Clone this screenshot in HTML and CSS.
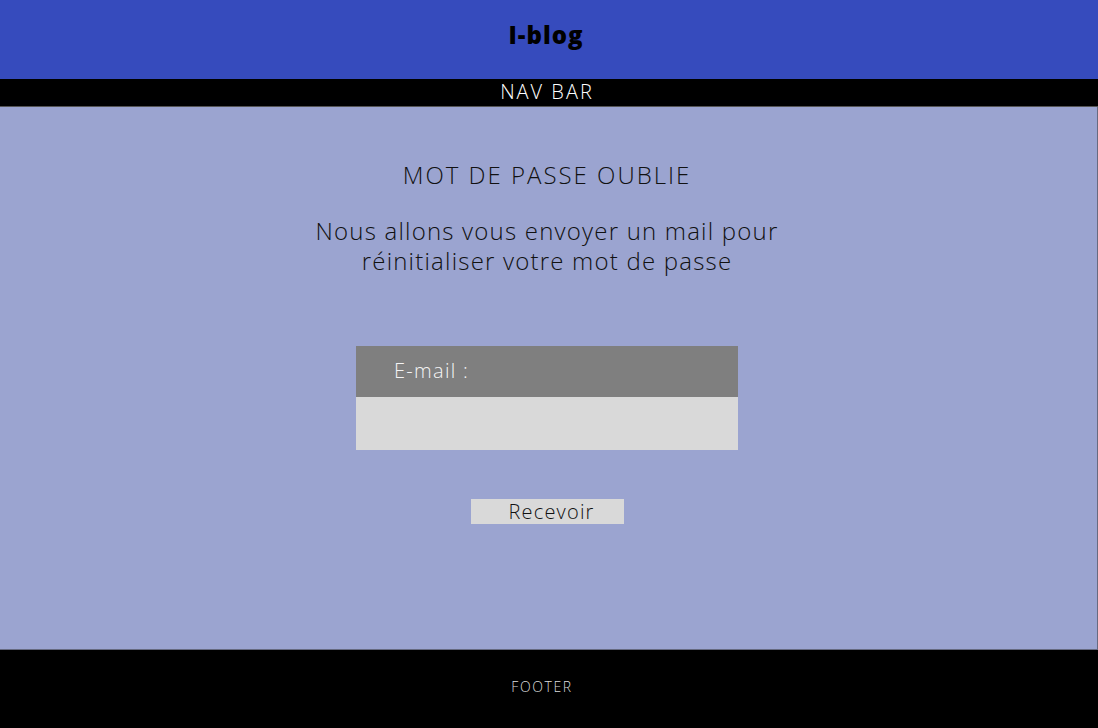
FILE: index.html
```html
<!DOCTYPE html>
<html lang="fr">
<head>
<meta charset="utf-8">
<title>I-blog</title>
<link rel="stylesheet" href="styles.css">
</head>
<body>
<header class="site-header">
  <div class="logo">I-blog</div>
</header>
<nav class="nav-bar">NAV BAR</nav>
<main class="content">
  <h1 class="title">MOT DE PASSE OUBLIE</h1>
  <p class="intro">Nous allons vous envoyer un mail pour réinitialiser votre mot de passe</p>
  <form class="form-box">
    <label class="form-label" for="email">E-mail :</label>
    <input class="form-input" id="email" type="email">
  </form>
  <button class="submit" type="button">Recevoir</button>
</main>
<footer class="site-footer">FOOTER</footer>
</body>
</html>
```
FILE: styles.css
```css
* { box-sizing: border-box; }
html, body { margin: 0; padding: 0; }
body {
  font-family: "Open Sans", "Liberation Sans", sans-serif;
  font-weight: 300;
  width: 1098px;
  height: 728px;
  overflow: hidden;
}
.site-header {
  height: 79px;
  background: #364bbd;
  display: flex;
  justify-content: center;
  align-items: center;
}
.logo {
  font-weight: 800;
  font-size: 24px;
  letter-spacing: 1px;
  color: #000;
  margin-top: -10px;
  margin-right: 6px;
}
.nav-bar {
  height: 28px;
  background: #000;
  color: #fff;
  font-size: 20px;
  letter-spacing: 2px;
  text-align: center;
  line-height: 26px;
  padding-right: 4px;
  border-bottom: 1px solid #555;
}
.content {
  height: 543px;
  background: #9ba4d0;
  border-right: 1px solid #666a80;
  border-bottom: 1px solid #666a80;
  display: flex;
  flex-direction: column;
  align-items: center;
  padding-top: 53px;
  padding-right: 3px;
}
.title {
  margin: 0;
  font-size: 24px;
  line-height: 30px;
  font-weight: 300;
  letter-spacing: 2px;
  color: #111;
}
.intro {
  margin: 26px 0 0;
  max-width: 500px;
  text-align: center;
  font-size: 24px;
  line-height: 29.5px;
  letter-spacing: 1.2px;
  color: #111;
}
.form-box {
  margin-top: 71px;
  width: 382px;
  display: flex;
  flex-direction: column;
}
.form-label {
  height: 51px;
  background: #7f7f7f;
  color: #f4f4f4;
  font-size: 20px;
  letter-spacing: 1.3px;
  padding-left: 38px;
  line-height: 50px;
}
.form-input {
  height: 53px;
  border: 0;
  background: #d9d9d9;
  margin: 0;
  outline: none;
}
.submit {
  margin-top: 49px;
  width: 153px;
  height: 25px;
  border: 0;
  padding: 0 0 0 9px;
  background: #d9d9d9;
  font-family: inherit;
  font-weight: 300;
  font-size: 20px;
  letter-spacing: 1.2px;
  color: #111;
  line-height: 25px;
}
.site-footer {
  height: 78px;
  background: #000;
  color: #ddd;
  font-size: 14px;
  letter-spacing: 1.6px;
  display: flex;
  justify-content: center;
  align-items: center;
  padding-right: 14px;
  padding-bottom: 6px;
}
```
